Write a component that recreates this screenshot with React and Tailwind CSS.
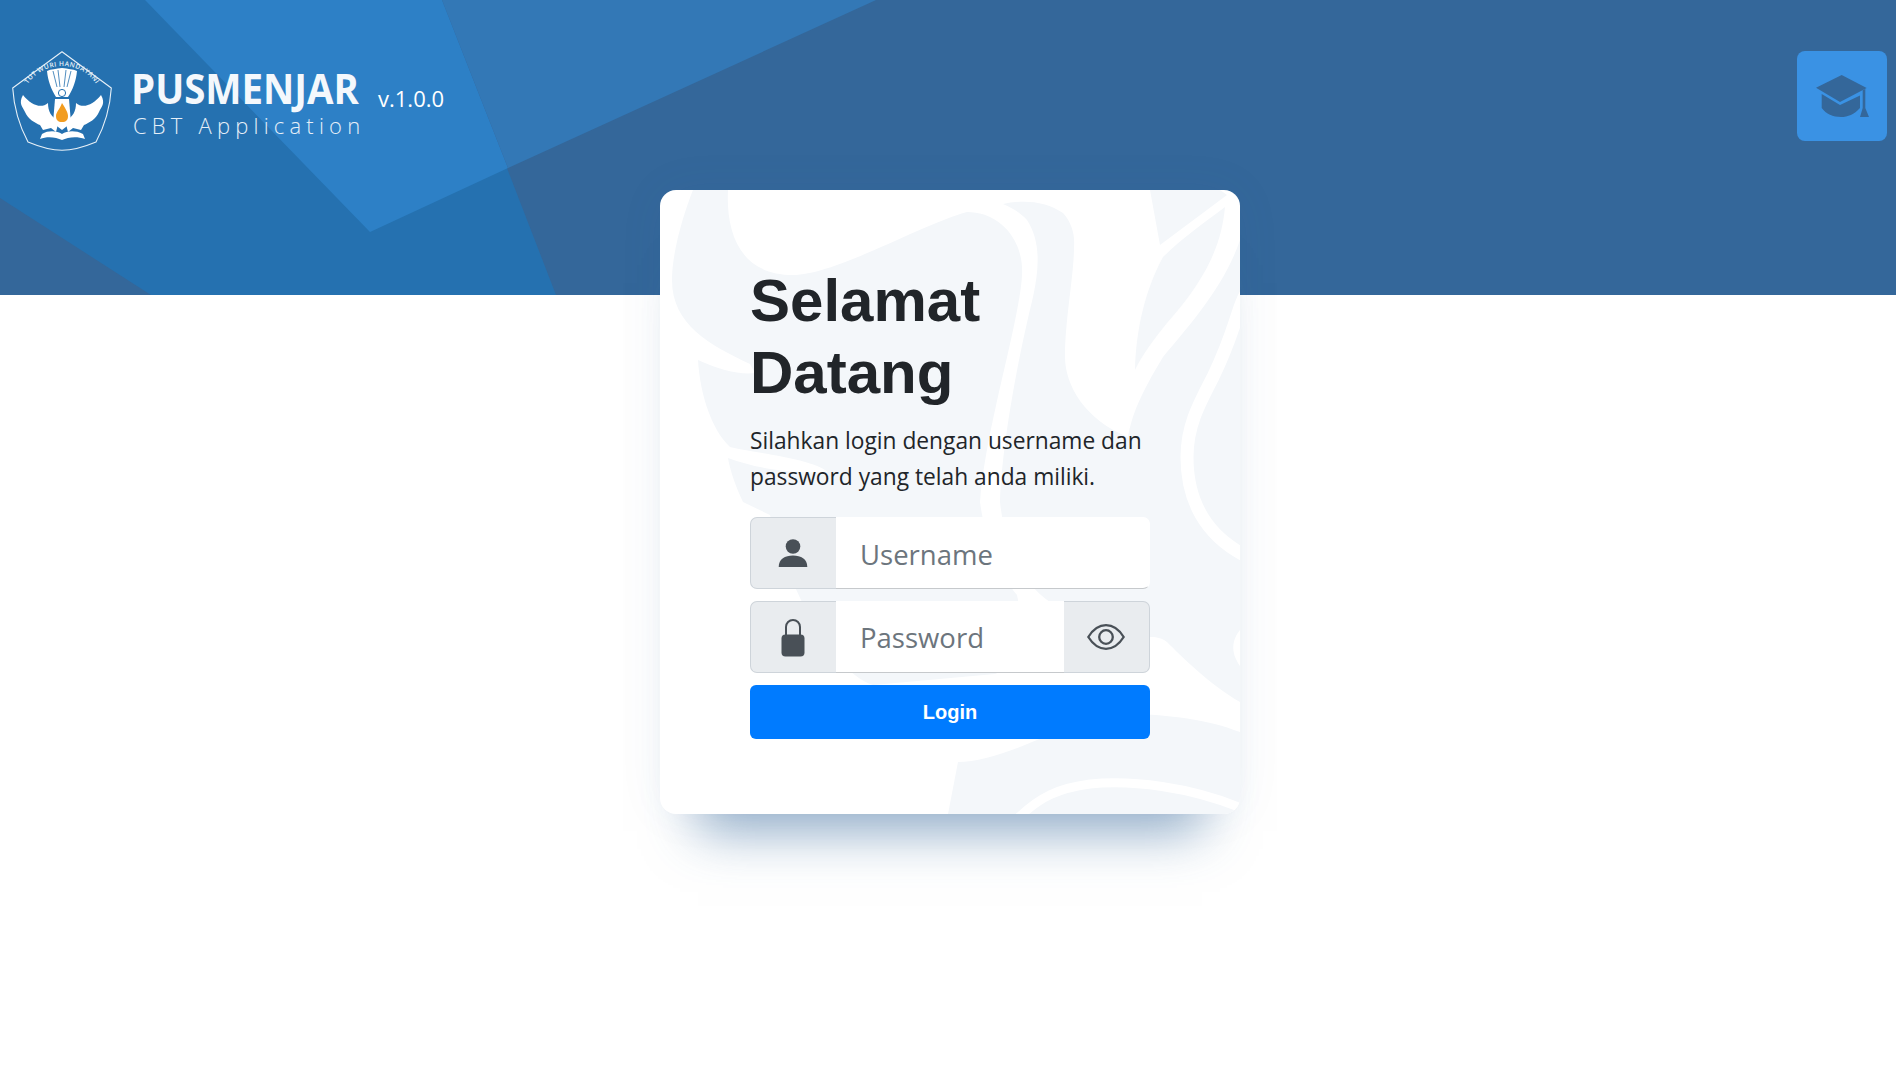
function HeaderShapes() {
  return (
    <svg className="absolute inset-0 h-full w-full" viewBox="0 0 1896 295" preserveAspectRatio="none" aria-hidden="true">
      <polygon points="0,0 442,0 556,295 151,295 0,198" fill="#2571b0" />
      <polygon points="145,0 442,0 508,168 370,232" fill="#2d80c6" />
      <polygon points="442,0 876,0 508,168" fill="#3378b6" />
    </svg>
  );
}

function Logo() {
  return (
    <svg viewBox="0 0 100 100" className="h-[100px] w-[100px] shrink-0" aria-hidden="true">
      <path d="M50 .7 L99.3 37 C98 58 92 76 84 91 C72 96 62 99.3 50 99.3 C38 99.3 28 96 16 91 C8 76 2 58 .7 37 Z" fill="none" stroke="#e8f1f8" strokeWidth="1.1" strokeLinejoin="round" />
      <defs>
        <path id="logoArc" d="M11 50 A39 35 0 0 1 89 50" />
      </defs>
      <text fontFamily="Open Sans, sans-serif" fontSize="6.6" fontWeight="600" fill="#e8f1f8" letterSpacing=".45">
        <textPath href="#logoArc" startOffset="50%" textAnchor="middle">TUT WURI HANDAYANI</textPath>
      </text>
      {/* blencong */}
      <path d="M35 20 C39 18 44 18 50 17 C56 18 61 18 65 20 C64 30 61 38 56 46 L44 46 C39 38 36 30 35 20 Z" fill="#fff" />
      <g stroke="#2571b0" strokeWidth=".8">
        <path d="M41 20 L45 36" />
        <path d="M46 19 L48 36" />
        <path d="M54 19 L52 36" />
        <path d="M59 20 L55 36" />
      </g>
      <circle cx="50" cy="42" r="3.6" fill="none" stroke="#2571b0" strokeWidth="1" />
      {/* wings */}
      <path d="M11 44 C6 53 11 56 13 61 C16 68 23 72 28 74 L31 79 L39 77 L44 81 L47 69 C39 67 36 60 36 52 C29 58 19 54 11 44 Z" fill="#fff" />
      <path d="M89 44 C94 53 89 56 87 61 C84 68 77 72 72 74 L69 79 L61 77 L56 81 L53 69 C61 67 64 60 64 52 C71 58 81 54 89 44 Z" fill="#fff" />
      <path d="M43 48 L57 48 L59 72 L50 79 L41 72 Z" fill="#fff" />
      <path d="M50 52 C53 57 56 61 56 65 C56 69 54 71 50 71 C46 71 44 69 44 65 C44 61 48 58 50 52 Z" fill="#f29c1f" />
      {/* book */}
      <path d="M30 83 C37 79 45 80 50 83 C55 80 63 79 71 83 L73 88 C65 85 56 86 50 89 C44 86 35 85 28 88 Z" fill="#fff" />
    </svg>
  );
}

function CapIcon() {
  return (
    <svg width="53" height="42" viewBox="0 0 53 42" fill="#34679a" aria-hidden="true">
      <path d="M0 12.7 L25.7 0 L50.7 13 L24 27 Z" />
      <path d="M5.7 19 L24 30 L44 20.5 L44 33 C38 39.5 32 42 25 42 C17 42 10 39 5.7 33 Z" />
      <path d="M46.7 15 L49.3 14 L49.3 33 L53 42 L44 42 L46.7 33 Z" />
    </svg>
  );
}

function CardPattern() {
  return (
    <svg className="absolute inset-0 h-full w-full" viewBox="0 0 580 624" preserveAspectRatio="none" aria-hidden="true">
      <g fill="#f4f7fa">
        <path d="M33 0 L68 0 C66 40 78 85 133 85 C175 85 260 35 307 22 C340 22 364 50 362 85 C360 130 325 240 320 312 C325 350 340 385 357 405 L370 470 L335 484 L213 495 C170 480 130 400 110 325 L83 312 C75 295 70 280 68 268 C100 280 140 284 168 282 C150 268 100 264 70 257 C52 240 40 205 38 170 C60 180 80 185 95 183 L90 174 C50 155 12 135 12 90 C12 60 25 20 33 0 Z" />
        <path d="M343 14 C362 10 384 10 403 23 C412 33 415 45 414 57 C414 85 405 130 405 167 C405 195 425 230 468 247 C472 225 480 205 503 167 C530 135 565 95 580 50 L580 512 C550 495 520 465 507 452 C500 447 495 447 490 447 L440 440 L390 412 C365 395 345 360 340 312 C342 250 360 160 373 107 C380 75 380 50 367 30 C360 22 352 18 343 14 Z" />
        <path d="M565 17 C562 50 550 85 507 133 C495 148 482 165 475 180 C476 140 485 100 503 67 C520 50 545 32 565 17 Z" />
        <path d="M490 0 L500 55 L567 5 L560 0 Z" />
        <path d="M288 624 L298 572 C330 572 375 552 420 530 C450 520 530 522 580 542 L580 624 Z" />
      </g>
      <g fill="none" stroke="#fff" strokeLinecap="round">
        <path d="M586 104 C578 115 576 140 553 187 C540 212 527 235 527 267 C527 310 545 345 586 366" strokeWidth="13" />
        <path d="M356 630 C380 606 400 598 430 594 C470 590 530 596 586 620" strokeWidth="9" />
      </g>
      <path d="M580 440 C572 450 570 462 580 476 Z" fill="#fff" />
    </svg>
  );
}

export default function App() {
  return (
    <div className="min-h-screen bg-white font-['Open_Sans',sans-serif]">
      <header className="relative flex h-[295px] items-start justify-between bg-[#34679a] pl-3 pr-[9px] pt-[51px]">
        <HeaderShapes />
        <div className="relative flex items-start">
          <Logo />
          <div className="ml-[19px] mt-[13px] flex w-[232px] flex-col">
            <span className="origin-left scale-x-[0.915] text-[42px] leading-[48px] font-bold whitespace-nowrap text-[#f4f8fc]">PUSMENJAR</span>
            <span className="ml-[2px] text-[22px] leading-[26px] font-light tracking-[5.2px] whitespace-nowrap text-[#e6eff8]">CBT Application</span>
          </div>
          <span className="ml-[15px] mt-[31px] text-[22px] leading-[32px] text-white">v.1.0.0</span>
        </div>
        <button className="relative flex h-[90px] w-[90px] items-center justify-center rounded-lg bg-[#3a92e4]">
          <CapIcon />
        </button>
      </header>

      <main className="relative z-10 ml-[660px] -mt-[105px] w-[580px] overflow-hidden rounded-2xl bg-white px-[90px] py-[75px] shadow-[0_55px_50px_-38px_rgba(52,103,154,0.55),0_0_50px_rgba(52,103,154,0.05)]">
        <CardPattern />
        <div className="relative">
          <h1 className="font-['Liberation_Sans',sans-serif] text-[60px] leading-[72px] font-bold text-[#212529]">
            Selamat
            <br />
            Datang
          </h1>
          <p className="mt-[14px] mb-[-2px] text-[22.75px] leading-[36px] text-[#212529]">
            Silahkan login dengan username dan password yang telah anda miliki.
          </p>

          <div className="mt-6 flex h-[72px]">
            <span className="flex w-[86px] items-center justify-center rounded-l-[7px] border border-r-0 border-[#ced4da] bg-[#e9ecef] pr-[1px]">
              <svg width="30" height="30" viewBox="0 0 30 30" fill="#495057" aria-hidden="true">
                <circle cx="15" cy="8.5" r="7.3" />
                <path d="M.7 29 C.7 21 7 17.5 15 17.5 C23 17.5 29.3 21 29.3 29 Z" />
              </svg>
            </span>
            <input
              placeholder="Username"
              className="min-w-0 flex-1 rounded-r-[7px] border border-l-0 border-white border-b-[#c6c9cc] bg-white pl-[24px] pt-[3px] text-[27.5px] text-[#495057] outline-none placeholder:text-[#6c757d]"
            />
          </div>

          <div className="mt-3 flex h-[72px]">
            <span className="flex w-[86px] items-center justify-center rounded-l-[7px] border border-r-0 border-[#ced4da] bg-[#e9ecef] pr-[1px]">
              <svg width="24" height="39" viewBox="0 0 24 39" fill="#495057" aria-hidden="true">
                <path d="M5 18 V9 a7 7 0 0 1 14 0 V18" fill="none" stroke="#495057" strokeWidth="2" />
                <rect x=".5" y="16.5" width="23" height="22" rx="4" />
              </svg>
            </span>
            <input
              type="password"
              placeholder="Password"
              className="min-w-0 flex-1 border-b border-[#c6c9cc] bg-white pl-[24px] pt-[3px] text-[27.5px] text-[#495057] outline-none placeholder:text-[#6c757d]"
            />
            <span className="flex w-[86px] items-center justify-center rounded-r-[7px] border border-l-0 border-[#ced4da] bg-[#e9ecef] pr-[2px]">
              <svg width="38" height="26" viewBox="0 0 38 26" fill="none" stroke="#495057" strokeWidth="2.3" aria-hidden="true">
                <path d="M1.3 13 C6 5.5 12 1.2 19 1.2 S32 5.5 36.7 13 C32 20.5 26 24.8 19 24.8 S6 20.5 1.3 13 Z" />
                <circle cx="19" cy="13" r="6.8" />
              </svg>
            </span>
          </div>

          <button className="mt-3 h-[54px] w-full rounded-md bg-[#007bff] font-['Liberation_Sans',sans-serif] text-[20px] font-bold text-white">
            Login
          </button>
        </div>
      </main>
    </div>
  );
}
